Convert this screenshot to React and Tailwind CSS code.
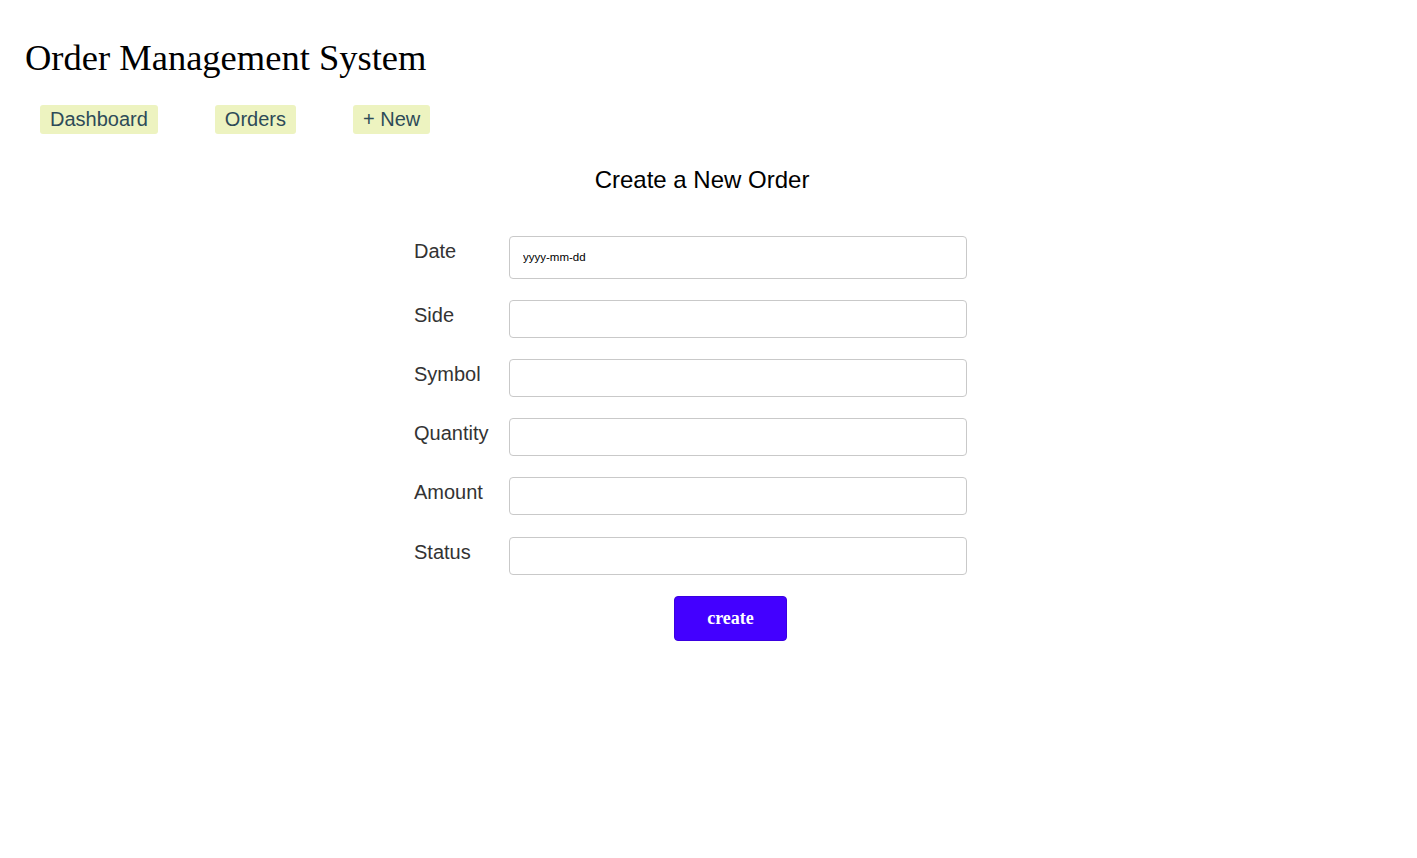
import React, { useState } from 'react'

const fields = ['Side', 'Symbol', 'Quantity', 'Amount', 'Status']

const NavLink = ({ label }) => (
  <a
    href="#"
    className="flex h-[29px] items-center rounded-[3px] bg-[#edf3c0] px-[10px] text-[20px] text-[#2d4b58] no-underline"
  >
    {label}
  </a>
)

const App = () => {
  const [form, setForm] = useState({ date: '', Side: '', Symbol: '', Quantity: '', Amount: '', Status: '' })

  const handleChange = (name, e) => {
    setForm({ ...form, [name]: e.target.value })
  }

  return (
    <div className="min-h-[858px] bg-white font-['Liberation_Sans',Arial,sans-serif]">
      <h1 className="ml-[25px] pt-[40px] font-['Liberation_Serif','Times_New_Roman',serif] text-[36.5px] font-normal leading-none text-black">
        Order Management System
      </h1>

      <nav className="ml-[40px] mt-[28px] flex gap-[57px]">
        <NavLink label="Dashboard" />
        <NavLink label="Orders" />
        <NavLink label="+ New" />
      </nav>

      <h2 className="mt-[34px] pr-[13px] text-center text-[24px] font-normal leading-none text-black">
        Create a New Order
      </h2>

      {/* form block sits a bit left of page centre, like the original */}
      <form className="ml-[414px] mt-[44px] w-[553px]" onSubmit={(e) => e.preventDefault()}>
        <div className="mb-[21px] flex items-start">
          <label className="w-[95px] text-[20px] leading-[30px] text-[#333]">Date</label>
          <input
            type="text"
            placeholder="yyyy-mm-dd"
            value={form.date}
            onChange={(e) => handleChange('date', e)}
            className="h-[43px] w-[458px] rounded-[4px] border border-[#c9c9c9] px-[13px] text-[11.5px] text-black outline-none placeholder:text-black"
          />
        </div>

        {fields.map((name) => (
          <div key={name} className="mb-[21.25px] flex items-start">
            <label className="w-[95px] text-[20px] leading-[30px] text-[#333]">{name}</label>
            <input
              type="text"
              value={form[name]}
              onChange={(e) => handleChange(name, e)}
              className="h-[38px] w-[458px] rounded-[4px] border border-[#c9c9c9] px-[13px] text-[14px] outline-none"
            />
          </div>
        ))}

        <div className="pl-[260px]">
          <button
            type="submit"
            className="h-[45px] w-[113px] rounded-[4px] border border-[#3a00e0] bg-[#4300ff] font-['Liberation_Serif','Times_New_Roman',serif] text-[18px] font-bold text-white"
          >
            create
          </button>
        </div>
      </form>
    </div>
  )
}

export default App
